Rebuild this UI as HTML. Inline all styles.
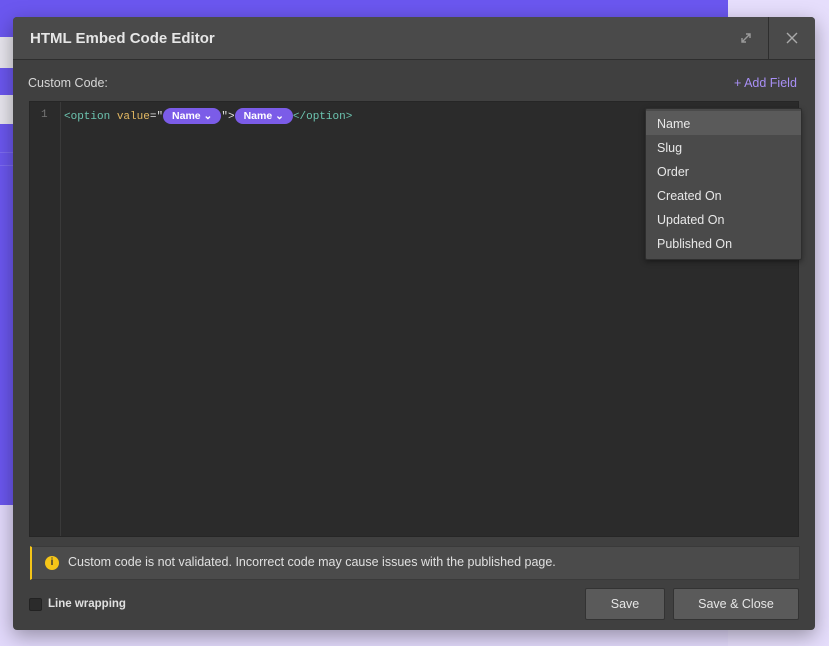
<!DOCTYPE html>
<html><head><style>
body{margin:0;width:829px;height:646px;position:relative;overflow:hidden;background:#e2d9fb;font-family:"Liberation Sans",sans-serif}
.a{position:absolute}
</style></head><body>
<div class="a" style="left:0;top:0;width:728px;height:505px;background:#6b57ef"></div>
<div class="a" style="left:0;top:37px;width:728px;height:31px;background:#e8e6ee"></div>
<div class="a" style="left:0;top:95px;width:728px;height:29px;background:#e8e6ee"></div>
<div class="a" style="left:0;top:152px;width:728px;height:1px;background:#7d6cf0"></div>
<div class="a" style="left:0;top:165px;width:728px;height:1px;background:#7d6cf0"></div>
<div class="a" style="left:728px;top:0;width:101px;height:646px;background:#e6defc"></div>
<div class="a" style="left:13px;top:17px;width:802px;height:613px;background:#404040;border-radius:4px;box-shadow:0 6px 20px rgba(0,0,0,.35);overflow:hidden">
 <div class="a" style="left:0;top:0;width:802px;height:42px;background:#4a4a4a;border-bottom:1px solid #2e2e2e"></div>
 <div class="a" style="left:17px;top:13px;color:#e6e6e6;font-size:15px;font-weight:bold">HTML Embed Code Editor</div>
 <div class="a" style="left:755px;top:0;width:1px;height:42px;background:#2e2e2e"></div>
 <svg class="a" style="left:727px;top:15px" width="12" height="12"><path d="M2 10L10 2M6 2h4v4M2 6v4h4" stroke="#9a9a9a" stroke-width="1.4" fill="none"/></svg>
 <svg class="a" style="left:773px;top:15px" width="12" height="12"><path d="M1 1L11 11M11 1L1 11" stroke="#aaa" stroke-width="1.4"/></svg>
 <div class="a" style="left:15px;top:59px;color:#d6d6d6;font-size:12.5px">Custom Code:</div>
 <div class="a" style="left:721px;top:59px;color:#a88ff5;font-size:12.5px">+ Add Field</div>
 <div class="a" style="left:16px;top:84px;width:768px;height:434px;background:#2b2b2b;border:1px solid #262626">
  <div class="a" style="left:0;top:0;width:30px;height:434px;border-right:1px solid #3a3a3a"></div>
  <div class="a" style="left:11px;top:7px;color:#777;font:11px 'Liberation Mono',monospace">1</div>
  <div class="a" style="left:34px;top:6px;font:11px 'Liberation Mono',monospace;white-space:nowrap;line-height:16px">
   <span style="color:#6cc4b0">&lt;option</span> <span style="color:#e3b862">value</span><span style="color:#e0e0e0">="</span><span style="display:inline-block;background:#7b5ce8;color:#fff;border-radius:9px;padding:0 9px;font:bold 10.5px 'Liberation Sans',sans-serif;line-height:16px">Name &#8964;</span><span style="color:#e0e0e0">"&gt;</span><span style="display:inline-block;background:#7b5ce8;color:#fff;border-radius:9px;padding:0 9px;font:bold 10.5px 'Liberation Sans',sans-serif;line-height:16px">Name &#8964;</span><span style="color:#6cc4b0">&lt;/option&gt;</span>
  </div>
 </div>
 <div class="a" style="left:632px;top:91px;width:157px;height:152px;background:#4a4a4a;border:1px solid #2e2e2e;border-radius:2px;box-shadow:0 2px 6px rgba(0,0,0,.4);font-size:12.5px;color:#e8e8e8;padding-top:2px;box-sizing:border-box">
  <div style="height:24px;line-height:26px;padding-left:11px;background:#5a5a5a">Name</div>
  <div style="height:24px;line-height:26px;padding-left:11px">Slug</div>
  <div style="height:24px;line-height:26px;padding-left:11px">Order</div>
  <div style="height:24px;line-height:26px;padding-left:11px">Created On</div>
  <div style="height:24px;line-height:26px;padding-left:11px">Updated On</div>
  <div style="height:24px;line-height:26px;padding-left:11px">Published On</div>
 </div>
 <div class="a" style="left:17px;top:529px;width:767px;height:32px;background:#4b4b4b;border:1px solid #3a3a3a;border-left:2px solid #f5c518"></div>
 <div class="a" style="left:32px;top:539px;width:14px;height:14px;border-radius:50%;background:#f5c518;color:#333;font:bold 10px 'Liberation Sans';text-align:center;line-height:14px">i</div>
 <div class="a" style="left:55px;top:538px;color:#e0e0e0;font-size:12.5px">Custom code is not validated. Incorrect code may cause issues with the published page.</div>
 <div class="a" style="left:16px;top:581px;width:11px;height:11px;background:#2b2b2b;border:1px solid #222;border-radius:2px"></div>
 <div class="a" style="left:35px;top:581px;color:#e0e0e0;font-size:11.5px;font-weight:bold">Line wrapping</div>
 <div class="a" style="left:572px;top:571px;width:78px;height:30px;background:#5a5a5a;border:1px solid #333;border-radius:2px;color:#e6e6e6;font-size:12.5px;text-align:center;line-height:30px">Save</div>
 <div class="a" style="left:660px;top:571px;width:124px;height:30px;background:#5a5a5a;border:1px solid #333;border-radius:2px;color:#e6e6e6;font-size:12.5px;text-align:center;line-height:30px">Save &amp; Close</div>
</div>
</body></html>
